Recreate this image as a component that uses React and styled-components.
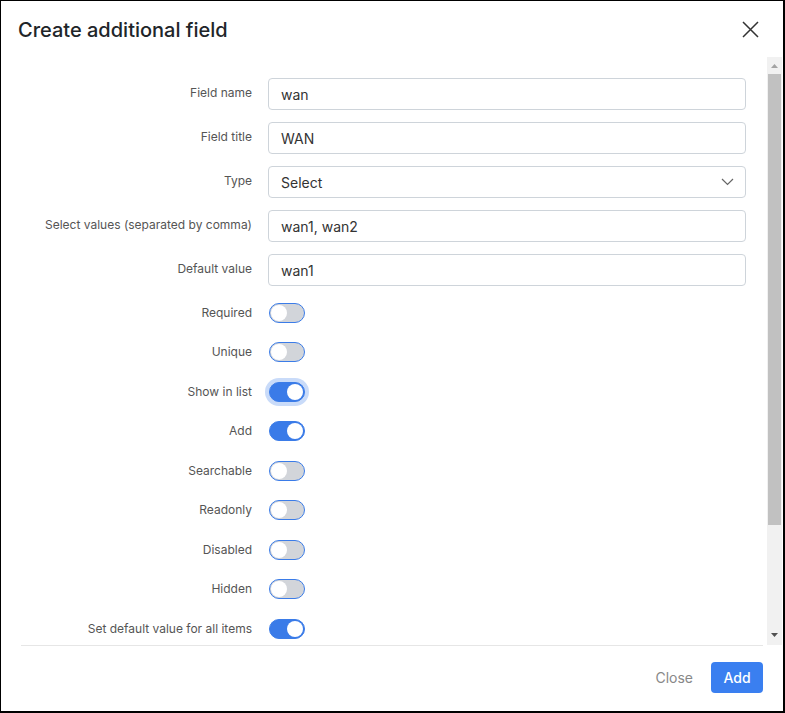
import React, { useState } from "react";
import styled, { createGlobalStyle } from "styled-components";

const GlobalStyle = createGlobalStyle`
  html, body {
    margin: 0;
    padding: 0;
    background: #fff;
  }
  body {
    font-family: Inter, "Noto Sans", "Liberation Sans", sans-serif;
  }
  * {
    box-sizing: border-box;
  }
`;

const inputs = [
  { label: "Field name", value: "wan" },
  { label: "Field title", value: "WAN" },
  { label: "Type", value: "Select", select: true },
  { label: "Select values (separated by comma)", value: "wan1, wan2" },
  { label: "Default value", value: "wan1" },
];

const switches = [
  { label: "Required", on: false },
  { label: "Unique", on: false },
  { label: "Show in list", on: true, focused: true },
  { label: "Add", on: true },
  { label: "Searchable", on: false },
  { label: "Readonly", on: false },
  { label: "Disabled", on: false },
  { label: "Hidden", on: false },
  { label: "Set default value for all items", on: true },
];

function App() {
  const [values, setValues] = useState(switches.map((s) => s.on));

  return (
    <>
      <GlobalStyle />
      <Modal>
        <Header>
          <Title>Create additional field</Title>
          <CloseIcon aria-label="Close">
            <svg width="17" height="17" viewBox="0 0 17 17">
              <path d="M1 1L16 16M16 1L1 16" stroke="#333" strokeWidth="1.5" fill="none" />
            </svg>
          </CloseIcon>
        </Header>
        <Body>
          <Viewport>
            <Form>
              {inputs.map((item) => (
                <React.Fragment key={item.label}>
                  <Label>{item.label}</Label>
                  <InputBox>
                    <InputText>{item.value}</InputText>
                    {item.select && (
                      <svg width="13" height="8" viewBox="0 0 13 8">
                        <polyline points="1,1 6.5,6.5 12,1" fill="none" stroke="#666" strokeWidth="1.2" />
                      </svg>
                    )}
                  </InputBox>
                </React.Fragment>
              ))}
              {switches.map((item, idx) => (
                <React.Fragment key={item.label}>
                  <Label switchRow first={idx === 0}>{item.label}</Label>
                  <SwitchCell first={idx === 0}>
                    <Switch
                      on={values[idx]}
                      focused={item.focused}
                      onClick={() =>
                        setValues(values.map((v, i) => (i === idx ? !v : v)))
                      }
                    >
                      <Knob on={values[idx]} />
                    </Switch>
                  </SwitchCell>
                </React.Fragment>
              ))}
            </Form>
          </Viewport>
          <Scrollbar>
            <ScrollButton>
              <svg width="7" height="4" viewBox="0 0 7 4">
                <polygon points="0,4 3.5,0 7,4" fill="#a3a3a3" />
              </svg>
            </ScrollButton>
            <ScrollTrack>
              <ScrollThumb />
            </ScrollTrack>
            <ScrollButton down>
              <svg width="7" height="4" viewBox="0 0 7 4">
                <polygon points="0,0 3.5,4 7,0" fill="#505050" />
              </svg>
            </ScrollButton>
          </Scrollbar>
        </Body>
        <Footer>
          <GhostButton>Close</GhostButton>
          <PrimaryButton>Add</PrimaryButton>
        </Footer>
      </Modal>
    </>
  );
}

export default App;

const Modal = styled.div`
  width: 785px;
  height: 713px;
  border: solid #000;
  border-width: 1px 2px 2px 1px;
  background: #fff;
  display: flex;
  flex-direction: column;
`;

const Header = styled.div`
  height: 56px;
  flex: 0 0 56px;
  display: flex;
  align-items: center;
  justify-content: space-between;
  padding: 2px 24px 0 17px;
`;

const Title = styled.h2`
  margin: 0;
  font-size: 20px;
  font-weight: 500;
  color: #212529;
  letter-spacing: 0;
`;

const CloseIcon = styled.button`
  border: none;
  background: none;
  padding: 0;
  margin-top: -2px;
  display: flex;
  cursor: pointer;
`;

const Body = styled.div`
  flex: 1;
  min-height: 0;
  display: flex;
`;

const Viewport = styled.div`
  flex: 1;
  overflow: hidden;
  padding: 21px 21px 0 20px;
`;

const Scrollbar = styled.div`
  width: 15px;
  margin-right: 1px;
  background: #f1f1f1;
  display: flex;
  flex-direction: column;
`;

const ScrollButton = styled.div`
  height: 15px;
  flex: 0 0 15px;
  display: flex;
  justify-content: center;
  align-items: ${(p) => (p.down ? "flex-start" : "flex-end")};
  padding: ${(p) => (p.down ? "3px 0 0" : "0 0 4px")};
`;

const ScrollTrack = styled.div`
  flex: 1;
  padding: 2px 1px 0;
`;

const ScrollThumb = styled.div`
  height: 451px;
  background: #c1c1c1;
`;

const Form = styled.div`
  display: grid;
  grid-template-columns: 231px 1fr;
  column-gap: 16px;
  row-gap: 12px;
  align-items: center;
`;

const Label = styled.div`
  text-align: right;
  font-size: 12px;
  color: #555;
  padding-bottom: ${(p) => (p.switchRow ? "1px" : "3px")};
  margin-top: ${(p) => (p.first ? "1px" : "0")};
  white-space: nowrap;
`;

const InputBox = styled.div`
  height: 32px;
  border: 1px solid #ced4da;
  border-radius: 4px;
  display: flex;
  align-items: center;
  justify-content: space-between;
  padding: 0 11px 0 12px;
`;

const InputText = styled.span`
  font-size: 14px;
  color: #333;
`;

const SwitchCell = styled.div`
  height: 27.5px;
  display: flex;
  align-items: center;
  margin-top: ${(p) => (p.first ? "1px" : "0")};
`;

const Switch = styled.button`
  position: relative;
  width: 36px;
  height: 20px;
  margin-left: 1px;
  padding: 0;
  border-radius: 10px;
  border: 1px solid #3b7ce8;
  background: ${(p) => (p.on ? "#3a7be8" : "#d2d5da")};
  box-shadow: ${(p) => (p.focused ? "0 0 0 4px #c9dbf9" : "none")};
  cursor: pointer;
`;

const Knob = styled.span`
  position: absolute;
  top: 1px;
  left: ${(p) => (p.on ? "17px" : "1px")};
  width: 16px;
  height: 16px;
  border-radius: 50%;
  background: #fff;
`;

const Footer = styled.div`
  margin: 0 20px;
  border-top: 1px solid #e6e6e6;
  display: flex;
  justify-content: flex-end;
  align-items: center;
  gap: 18px;
  padding: 16px 0 18px 0;
`;

const GhostButton = styled.button`
  border: none;
  background: none;
  font-family: inherit;
  font-size: 14px;
  color: #888;
  padding: 0;
  cursor: pointer;
`;

const PrimaryButton = styled.button`
  width: 52px;
  height: 31px;
  border: none;
  border-radius: 4px;
  background: #3a7ff0;
  color: #fff;
  font-family: inherit;
  font-size: 14px;
  font-weight: 500;
  cursor: pointer;
`;
